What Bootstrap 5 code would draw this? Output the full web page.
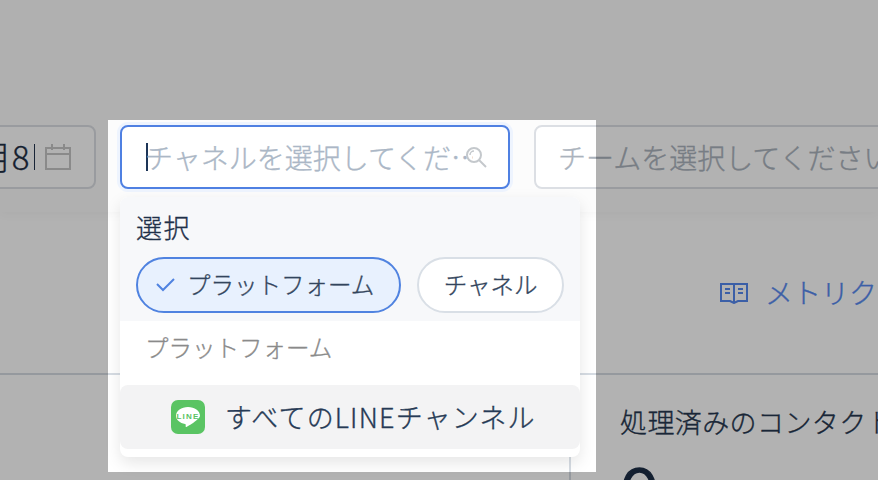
<!DOCTYPE html>
<html lang="ja">
<head>
<meta charset="utf-8">
<title>チャネル選択</title>
<link href="https://cdn.jsdelivr.net/npm/bootstrap@5.3.0/dist/css/bootstrap.min.css" rel="stylesheet">
<style>
html,body{height:480px;overflow:hidden;background:#fff;}
body{font-family:"Noto Sans CJK JP","Noto Sans",sans-serif;font-weight:300;-webkit-text-stroke:.35px;color:#1f3049;position:relative;}
.top-bar{height:212px;padding-top:125px;background:#fcfcfc;box-shadow:0 2px 10px rgba(0,0,0,.04);gap:24px;}
.field-box{height:64px;border:2px solid #dcdfe4;border-radius:8px;background:#fff;font-size:28px;flex:none;white-space:nowrap;overflow:hidden;}
.date-box{width:200px;margin-left:-104px;padding-right:23px;justify-content:flex-end;gap:10px;}
.date-text{color:#1e2e44;font-size:33px;}
.date-sep{width:1.5px;height:26px;background:#243650;margin-left:-6px;}
.chan-wrap{width:390px;height:64px;flex:none;position:relative;}
.spot-hole{position:absolute;left:-12px;top:-5px;width:488px;height:352px;box-shadow:0 0 0 1400px rgba(0,0,0,.3);pointer-events:none;z-index:5;}
.chan-box{width:390px;border-color:#4f80e2;box-shadow:0 0 0 3px #eef4fe;padding:0 21px 0 24px;position:relative;z-index:6;}
.caret-bar{width:2px;height:28px;background:#1d3557;flex:none;}
.ph-text{color:#abb7c6;overflow:hidden;flex:1;min-width:0;margin-left:-3px;margin-right:-8px;}
.team-box{width:500px;padding-left:22px;color:#abb3bd;}
.drop-panel{position:absolute;left:0;top:72px;width:460px;height:260px;background:#fff;border-radius:8px;box-shadow:0 6px 16px rgba(0,0,0,.1);z-index:6;overflow:hidden;}
.drop-head{height:124px;background:#f7f8fa;padding:11px 16px 0;}
.drop-title{font-size:26px;line-height:38px;margin-bottom:11px;letter-spacing:1.5px;}
.pill-btn{height:56px;border-radius:28px;border:2px solid #d9dfe6;background:#fff;font-size:23.500px;color:#33455d;padding:0 24.500px;display:flex;align-items:center;white-space:nowrap;}
.pill-on{background:#e8f1fe;border-color:#5083e0;padding:0 25px 0 18px;gap:12px;}
.group-name{font-size:23.500px;color:#8a8a8a;padding:9px 0 0 25px;height:64px;line-height:34px;}
.line-row{height:64px;background:#f3f3f4;border-radius:8px;padding-left:51px;gap:20px;font-size:27px;letter-spacing:1.200px;color:#263a55;white-space:nowrap;}
.mid-row{height:163px;border-bottom:2px solid #d6dce3;padding:62px 0 0 720px;white-space:nowrap;}
.metric-link{color:#5588f0;font-size:28px;line-height:36px;text-decoration:none;gap:17px;}
.low-row{height:105px;overflow:hidden;}
.low-left{width:571px;border-right:2px solid #d6dce3;flex:none;}
.low-right{padding:32px 0 0 49px;white-space:nowrap;}
.metric-label{font-size:27px;line-height:30px;color:#26374f;letter-spacing:.4px;}
.metric-num{font-size:80px;color:#1d2e47;margin:-5px 0 0 -2px;-webkit-text-stroke:1.5px;}
</style>
</head>
<body>
<header class="top-bar d-flex">
  <div class="field-box date-box d-flex align-items-center">
    <span class="date-text">3月8</span>
    <span class="date-sep"></span>
    <svg width="26" height="26" viewBox="0 0 26 26" fill="none" stroke="#c6c6c6" stroke-width="2"><rect x="1" y="4" width="24" height="21"/><path d="M1 10h24M7 0v6M19 0v6"/></svg>
  </div>
  <div class="chan-wrap">
    <div class="spot-hole"></div>
    <div class="field-box chan-box d-flex align-items-center">
      <span class="caret-bar"></span>
      <span class="ph-text">チャネルを選択してくだ…</span>
      <svg width="22" height="22" viewBox="0 0 22 22" fill="none" stroke="#c4c8cc" stroke-width="2" class="flex-shrink-0"><circle cx="9" cy="9" r="7"/><path d="M14 14l7 7"/><path d="M5 9a4 4 0 0 1 4-4" stroke-width="1.5"/></svg>
    </div>
    <div class="drop-panel">
      <div class="drop-head">
        <div class="drop-title">選択</div>
        <div class="d-flex gap-3">
          <div class="pill-btn pill-on">
            <svg width="19" height="14" viewBox="0 0 19 14" fill="none" stroke="#5083e0" stroke-width="2"><path d="M1 6l6 6L18 1"/></svg>
            <span>プラットフォーム</span>
          </div>
          <div class="pill-btn">チャネル</div>
        </div>
      </div>
      <div class="group-name">プラットフォーム</div>
      <div class="line-row d-flex align-items-center">
        <svg width="34" height="34" viewBox="0 0 34 34"><rect width="34" height="34" rx="7" fill="#5ac463"/><path d="M17 7c-6.600 0-12 3.800-12 8.700 0 4.200 3.900 7.300 9 8.300 1 .2.800 1 .6 2.300 0 .6.400 1 1.200.5 2-1.200 8-4.700 10.500-7.300 1.700-1.500 2.700-3 2.700-3.800C29 10.800 23.600 7 17 7z" fill="#fff"/><text x="17" y="18.800" text-anchor="middle" font-size="8" font-weight="700" fill="#5ac463" stroke="none" font-family="Liberation Sans, sans-serif">LINE</text></svg>
        <span>すべてのLINEチャンネル</span>
      </div>
    </div>
  </div>
  <div class="field-box team-box d-flex align-items-center">チームを選択してください</div>
</header>
<section class="mid-row">
  <a class="metric-link d-inline-flex align-items-center" href="#">
    <svg width="28" height="24" viewBox="0 0 28 24" fill="none" stroke="#5588f0" stroke-width="2"><path d="M14 4H1v17h9l4 2 4-2h9V4z"/><path d="M14 4v18M5 9h5M5 13h5M18 9h5M18 13h5"/></svg>
    <span>メトリクス</span>
  </a>
</section>
<section class="low-row d-flex">
  <div class="low-left"></div>
  <div class="low-right">
    <div class="metric-label">処理済みのコンタクト</div>
    <div class="metric-num">0</div>
  </div>
</section>
<script src="https://cdn.jsdelivr.net/npm/bootstrap@5.3.0/dist/js/bootstrap.bundle.min.js"></script>
</body>
</html>
